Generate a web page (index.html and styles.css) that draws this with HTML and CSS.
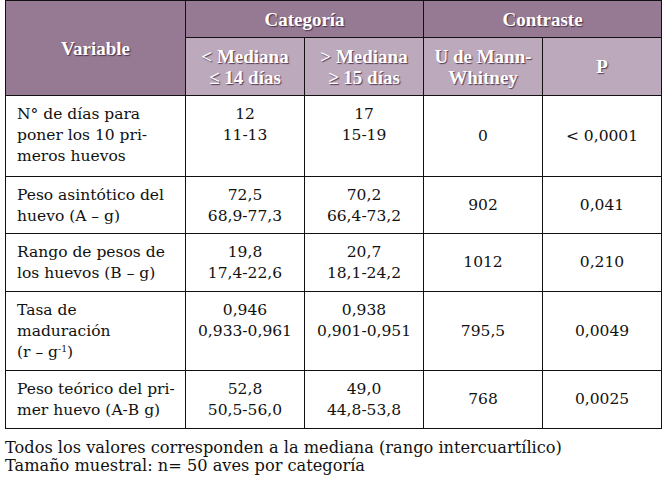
FILE: index.html
```html
<!DOCTYPE html>
<html lang="es">
<head>
<meta charset="utf-8">
<title>Tabla</title>
<link rel="stylesheet" href="styles.css">
</head>
<body>
<table class="data">
  <colgroup>
    <col class="c-var">
    <col class="c-num">
    <col class="c-num">
    <col class="c-num">
    <col class="c-num">
  </colgroup>
  <thead>
    <tr class="h1">
      <th rowspan="2" class="dark">Variable</th>
      <th colspan="2" class="dark">Categoría</th>
      <th colspan="2" class="dark">Contraste</th>
    </tr>
    <tr class="h2">
      <th class="light">&lt; Mediana<br>≤ 14 días</th>
      <th class="light">&gt; Mediana<br>≥ 15 días</th>
      <th class="light">U de Mann-<br>Whitney</th>
      <th class="light">P</th>
    </tr>
  </thead>
  <tbody>
    <tr class="r1">
      <td class="var">N° de días para<br>poner los 10 pri-<br>meros huevos</td>
      <td class="cat">12<br>11-13</td>
      <td class="cat">17<br>15-19</td>
      <td class="mid">0</td>
      <td class="mid">&lt; 0,0001</td>
    </tr>
    <tr class="r2">
      <td class="var">Peso asintótico del<br>huevo (A – g)</td>
      <td class="cat">72,5<br>68,9-77,3</td>
      <td class="cat">70,2<br>66,4-73,2</td>
      <td class="mid">902</td>
      <td class="mid">0,041</td>
    </tr>
    <tr class="r3">
      <td class="var">Rango de pesos de<br>los huevos (B – g)</td>
      <td class="cat">19,8<br>17,4-22,6</td>
      <td class="cat">20,7<br>18,1-24,2</td>
      <td class="mid">1012</td>
      <td class="mid">0,210</td>
    </tr>
    <tr class="r4">
      <td class="var">Tasa de<br>maduración<br>(r – g<sup>-1</sup>)</td>
      <td class="cat">0,946<br>0,933-0,961</td>
      <td class="cat">0,938<br>0,901-0,951</td>
      <td class="mid">795,5</td>
      <td class="mid">0,0049</td>
    </tr>
    <tr class="r5">
      <td class="var">Peso teórico del pri-<br>mer huevo (A-B g)</td>
      <td class="cat">52,8<br>50,5-56,0</td>
      <td class="cat">49,0<br>44,8-53,8</td>
      <td class="mid">768</td>
      <td class="mid">0,0025</td>
    </tr>
  </tbody>
</table>
<p class="note">Todos los valores corresponden a la mediana (rango intercuartílico)<br>Tamaño muestral: n= 50 aves por categoría</p>
</body>
</html>
```
FILE: styles.css
```css
html, body {
  margin: 0;
  padding: 0;
  background: #ffffff;
}
body {
  font-family: "DejaVu Serif", "Liberation Serif", serif;
  color: #111111;
  padding-left: 5px;
}
.data {
  border-collapse: collapse;
  table-layout: fixed;
  width: 657px;
  font-size: 15.5px;
  line-height: 21px;
}
.c-var { width: 180px; }
.c-num { width: 119px; }
.data th, .data td {
  border: 1px solid #111;
  padding: 0;
}
.data th {
  font-family: "Liberation Serif", "DejaVu Serif", serif;
  font-size: 19px;
  color: #ffffff;
  font-weight: bold;
  text-align: center;
  vertical-align: middle;
  text-shadow: 1px 1px 1px rgba(50, 20, 45, 0.75);
}
.dark { background: #967a94; }
.light { background: #bca9bc; }
.h1 { height: 37px; }
.h2 { height: 58px; }
.data td {
  vertical-align: top;
  padding-top: 8px;
}
.var {
  text-align: left;
  padding-left: 11px !important;
}
.cat { text-align: center; }
.mid {
  text-align: center;
  vertical-align: middle !important;
  padding-top: 0 !important;
}
.r1 { height: 81px; }
.r2 { height: 57px; }
.r3 { height: 58px; }
.r4 { height: 79px; }
.r5 { height: 58px; }
sup {
  font-size: 0.6em;
  line-height: 0;
  vertical-align: 0.55em;
}
.note {
  margin: 10px 0 0 0;
  font-size: 16.2px;
  line-height: 18px;
}
```
